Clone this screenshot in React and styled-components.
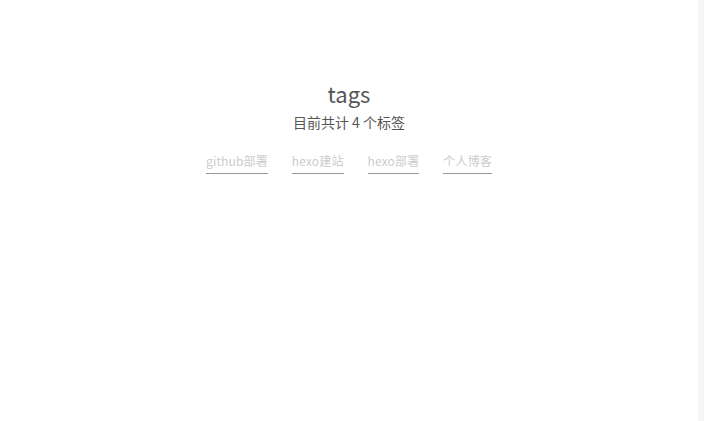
import React from "react";
import styled, { createGlobalStyle } from "styled-components";

const Global = createGlobalStyle`
  html, body { margin: 0; padding: 0; background: #fff; }
  body { font-family: "Noto Sans CJK SC", "Noto Sans", sans-serif; }
`;

const Layout = styled.div`
  display: flex;
  height: 421px;
  width: 704px;
`;

const Main = styled.main`
  flex: 1;
  display: flex;
  flex-direction: column;
  align-items: center;
  padding-top: 77px;
`;

const Rail = styled.aside`
  width: 6px;
  background: #f5f6f8;
`;

const Title = styled.h1`
  margin: 0;
  font-size: 22px;
  font-weight: 400;
  line-height: 32px;
  color: #555;
`;

const Summary = styled.div`
  margin-top: 3px;
  font-size: 14px;
  line-height: 20px;
  color: #555;
`;

const Cloud = styled.div`
  display: flex;
  gap: 24px;
  margin-top: 20px;
`;

const Tag = styled.a`
  font-size: 12px;
  line-height: 18px;
  letter-spacing: 0.15px;
  color: #ccc;
  text-decoration: none;
  border-bottom: 1px solid #999;
  padding-bottom: 3px;
`;

const tags = ["github部署", "hexo建站", "hexo部署", "个人博客"];

export default function App() {
  return (
    <>
      <Global />
      <Layout>
        <Main>
          <Title>tags</Title>
          <Summary>目前共计 4 个标签</Summary>
          <Cloud>
            {tags.map((t) => (
              <Tag key={t} href="#">{t}</Tag>
            ))}
          </Cloud>
        </Main>
        <Rail />
      </Layout>
    </>
  );
}
